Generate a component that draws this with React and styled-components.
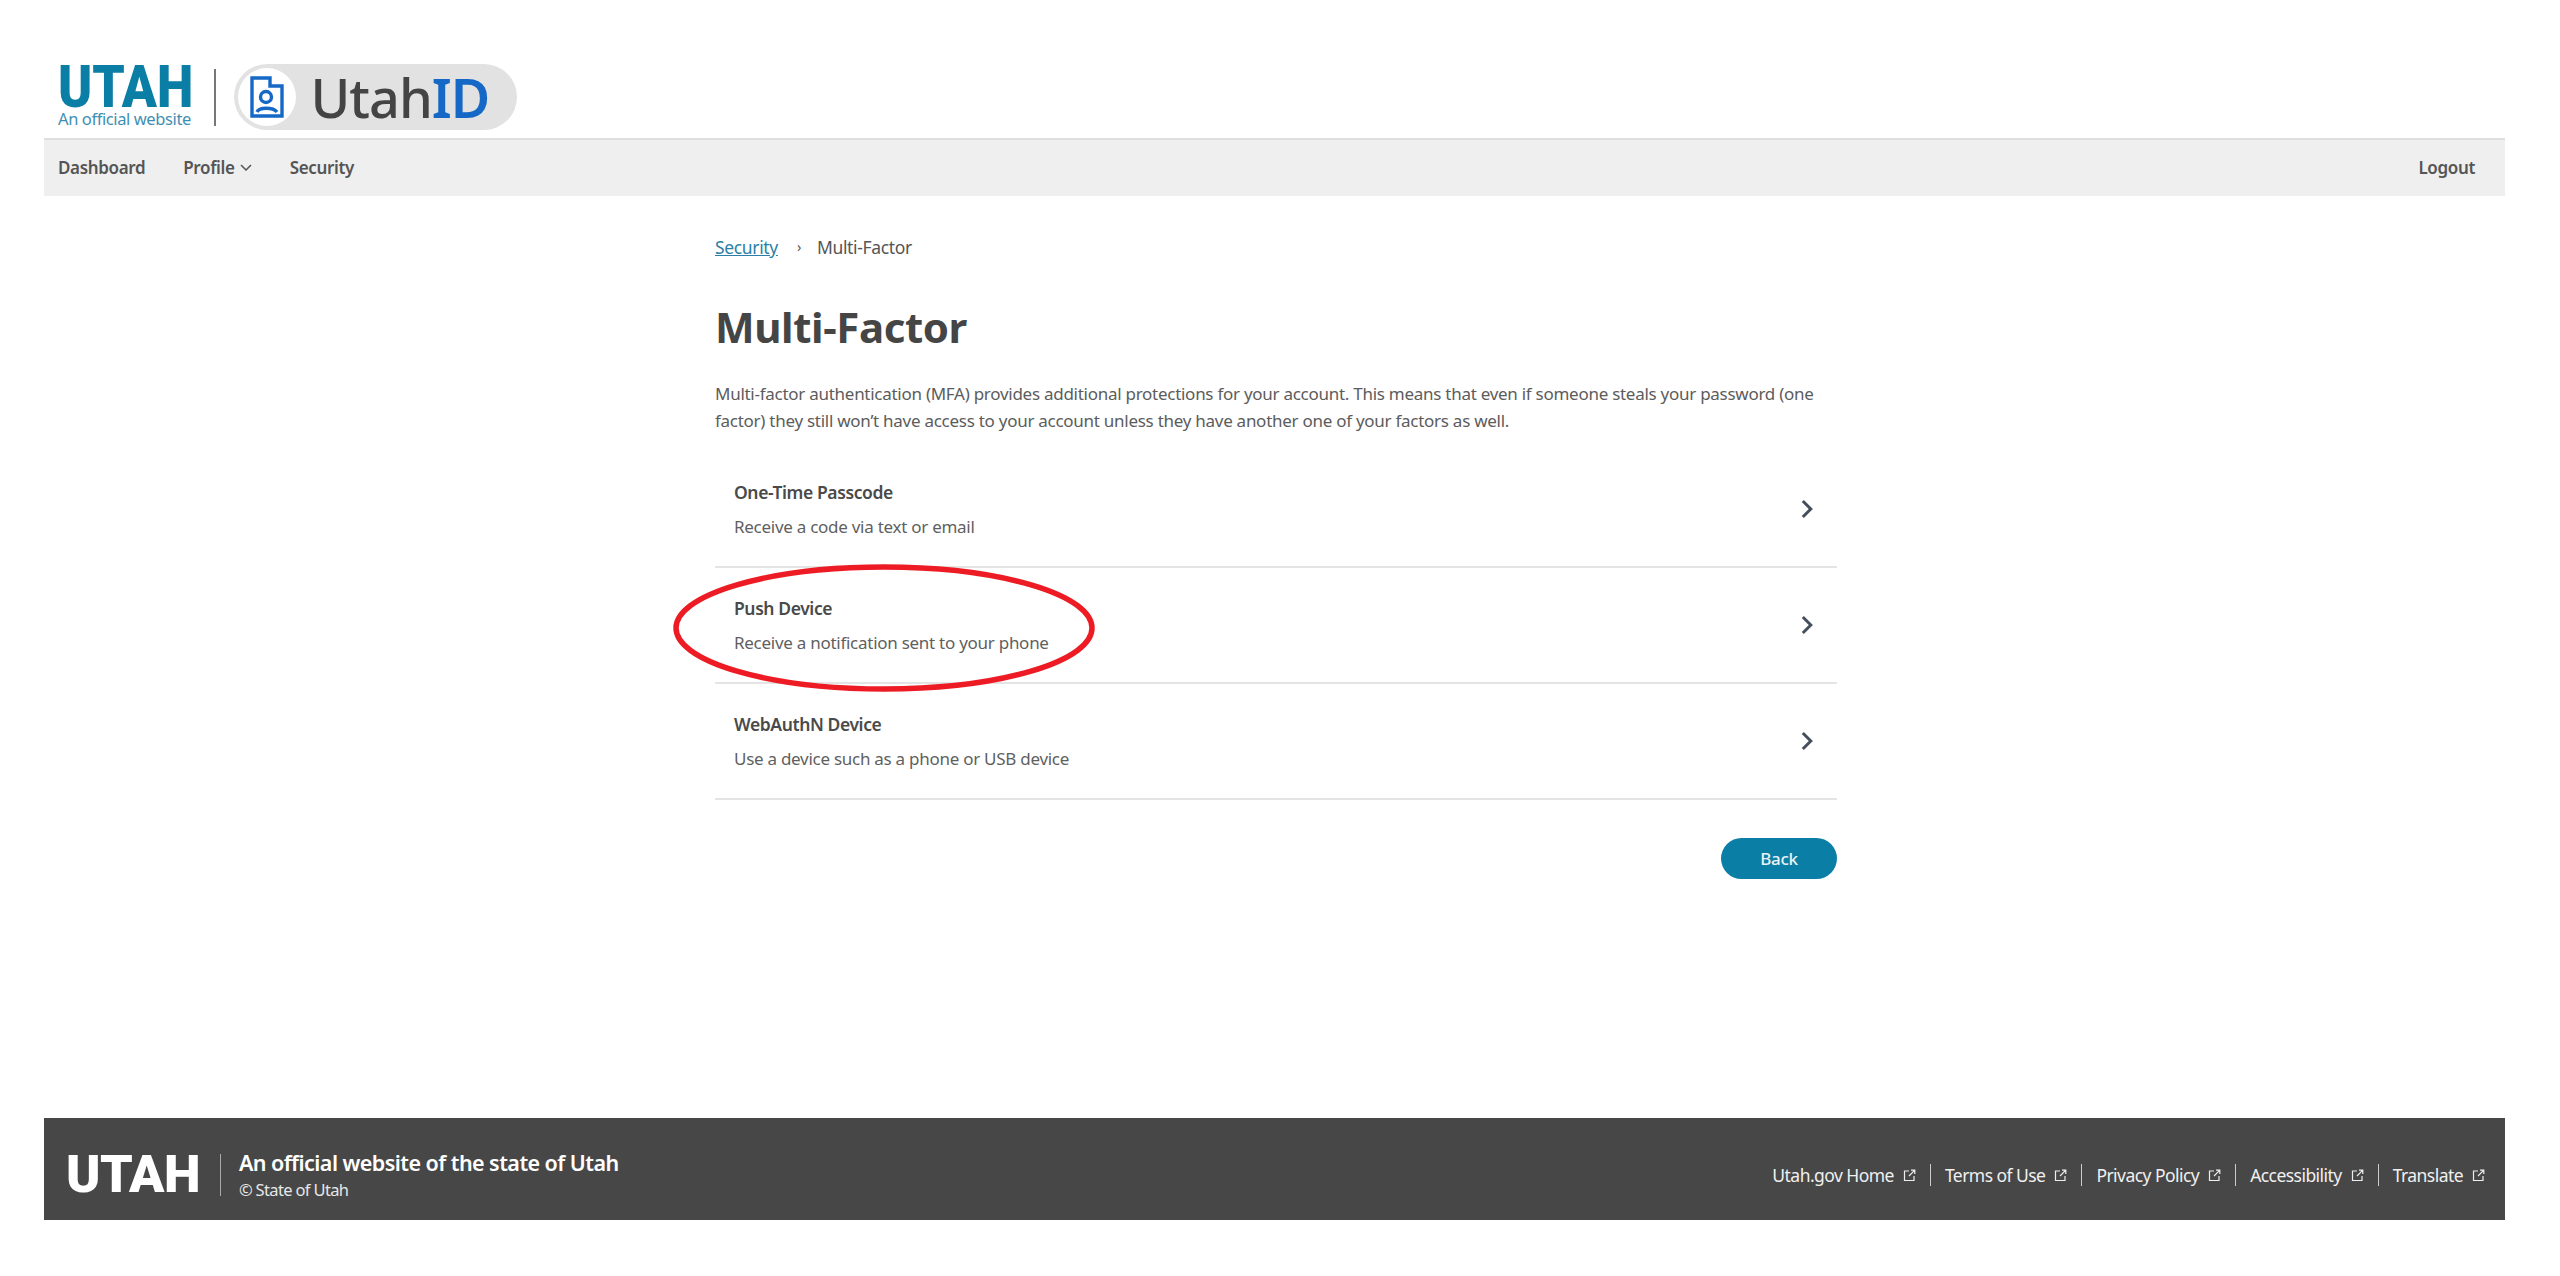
import React from "react";
import styled, { createGlobalStyle } from "styled-components";

const Global = createGlobalStyle`
  html, body { margin: 0; padding: 0; background: #fff; }
  body { font-family: "Noto Sans", "Open Sans", sans-serif; color: #474747; }
`;
const Page = styled.div`
  box-sizing: border-box; min-height: 1276px; padding: 0 55px 56px 44px;
  display: flex; flex-direction: column;
`;
const Header = styled.header`
  height: 138px; box-sizing: border-box; padding: 64px 0 0 14px;
  display: flex; align-items: flex-start;
`;
const StateLogo = styled.div`width: 138px; display: flex; flex-direction: column; align-items: flex-start;`;
const StateMark = styled.span`
  font: 900 60px/46px Roboto, sans-serif; color: #0b7ea6; letter-spacing: 0;
  transform: scaleX(.86); transform-origin: top left; white-space: nowrap;
`;
const StateTag = styled.span`font-size: 16.5px; line-height: 18px; color: #3f8fb3; letter-spacing: -.4px; white-space: nowrap;`;
const LogoDivider = styled.div`width: 1.5px; height: 57px; background: #777; margin: 5px 18px 0 18px;`;
const AppPill = styled.div`
  width: 283px; height: 66px; border-radius: 33px; background: #e2e2e2;
  display: flex; align-items: center; padding-left: 4px; box-sizing: border-box;
`;
const AppBadge = styled.div`
  width: 58px; height: 58px; border-radius: 50%; background: #fff; flex: none;
  display: flex; align-items: center; justify-content: center;
`;
const AppName = styled.span`
  margin-left: 15px; font-size: 54px; line-height: 66px; font-weight: 500; color: #444; letter-spacing: -1px;
`;
const AppNameAccent = styled.span`color: #1568c6; font-weight: 600;`;
const Nav = styled.nav`
  height: 58px; background: #efefef; border-top: 2px solid #dedede; box-sizing: border-box;
  display: flex; align-items: center; padding: 0 30px 2px 14px;
  font-size: 17px; font-weight: 600; color: #555;
`;
const NavItem = styled.a`display: inline-flex; align-items: center; gap: 5px; margin-right: 38px; letter-spacing: -.35px;`;
const NavEnd = styled(NavItem)`margin: 0 0 0 auto;`;
const Main = styled.main`width: 1122px; margin-left: 671px; padding-top: 39px;`;
const Crumbs = styled.div`display: flex; align-items: center; font-size: 17.5px; line-height: 24px; color: #555; letter-spacing: -.35px;`;
const CrumbLink = styled.a`color: #2b7fa6; text-decoration: underline;`;
const CrumbSep = styled.span`margin: 0 16px 0 19px; font-size: 14px;`;
const Title = styled.h1`margin: 38px 0 0; font-size: 42px; line-height: 60px; font-weight: 700; color: #454545; letter-spacing: -.4px;`;
const Intro = styled.p`margin: 23px 0 0; font-size: 17px; line-height: 27px; color: #5c5c5c; letter-spacing: -.27px; width: 1122px;`;
const List = styled.div`margin-top: 18px; position: relative;`;
const Row = styled.a`
  height: 116px; box-sizing: border-box; border-bottom: 2px solid #e4e4e4;
  padding: 0 24px 0 19px; display: flex; align-items: center; justify-content: space-between;
`;
const RowText = styled.div`display: flex; flex-direction: column; gap: 11px;`;
const RowTitle = styled.span`font-size: 17.5px; line-height: 23px; font-weight: 600; color: #4a4a4a; letter-spacing: -.4px;`;
const RowSub = styled.span`font-size: 17px; line-height: 23px; color: #5f5f5f; letter-spacing: -.27px;`;
const Annotation = styled.svg`position: absolute; left: -43px; top: 111px; pointer-events: none;`;
const Actions = styled.div`display: flex; justify-content: flex-end; margin-top: 38px;`;
const BackButton = styled.button`
  width: 116px; height: 41px; border: 0; border-radius: 21px; background: #0b7ea6; color: #e8f3f7;
  font: 500 17px "Noto Sans", sans-serif; letter-spacing: -.3px;
`;
const Footer = styled.footer`
  margin-top: auto; height: 102px; box-sizing: border-box; background: #474747; color: #fff;
  display: flex; align-items: center; padding: 12px 20px 0 22px;
`;
const FooterMark = styled.span`font: 900 52px/1 Roboto, sans-serif; letter-spacing: -.6px; color: #fff;`;
const FooterDivider = styled.div`width: 1px; height: 42px; background: #aaa; margin: 0 18px 0 20px;`;
const FooterText = styled.div`display: flex; flex-direction: column; gap: 4px; margin-top: 0;`;
const FooterTitle = styled.span`font-size: 21.5px; line-height: 26px; font-weight: 600; letter-spacing: -.55px;`;
const FooterSub = styled.span`font-size: 16.5px; line-height: 20px; color: #e6e6e6; letter-spacing: -.65px;`;
const FooterLinks = styled.div`margin-left: auto; display: flex; align-items: center; margin-top: 0;`;
const FooterLink = styled.a`
  display: inline-flex; align-items: center; gap: 9px; font-size: 17.5px; line-height: 22px; color: #f0f0f0; letter-spacing: -.55px;
  & + & { border-left: 1.5px solid #ccc; margin-left: 14px; padding-left: 14px; }
`;

const Chevron = () => (
  <svg width="12" height="20" viewBox="0 0 12 20" fill="none" stroke="#454f5c" strokeWidth="3"><path d="M1.8 2 9.8 10 1.8 18" /></svg>
);
const Caret = () => (
  <svg width="12" height="7" viewBox="0 0 12 7" fill="none" stroke="#555" strokeWidth="1.5"><path d="M1 1l5 5 5-5" /></svg>
);
const External = () => (
  <svg width="13" height="13" viewBox="0 0 13 13" fill="none" stroke="#eee" strokeWidth="1.2">
    <path d="M6 2H1.5v9.5H11V7" /><path d="M8 1.2h3.8V5M11.6 1.4 6 7" />
  </svg>
);
const IdIcon = () => (
  <svg width="34" height="42" viewBox="0 0 34 42" fill="none" stroke="#1568c6" strokeWidth="3.4">
    <path d="M2 2h18v8h12v30H2z" />
    <circle cx="16" cy="21" r="5.5" />
    <path d="M7 36c2-5 16-5 20 0" />
  </svg>
);

const rows = [
  ["One-Time Passcode", "Receive a code via text or email"],
  ["Push Device", "Receive a notification sent to your phone"],
  ["WebAuthN Device", "Use a device such as a phone or USB device"],
];
const links = ["Utah.gov Home", "Terms of Use", "Privacy Policy", "Accessibility", "Translate"];

export default function App() {
  return (
    <>
      <Global />
      <Page>
        <Header>
          <StateLogo>
            <StateMark>UTAH</StateMark>
            <StateTag>An official website</StateTag>
          </StateLogo>
          <LogoDivider />
          <AppPill>
            <AppBadge><IdIcon /></AppBadge>
            <AppName>Utah<AppNameAccent>ID</AppNameAccent></AppName>
          </AppPill>
        </Header>
        <Nav>
          <NavItem>Dashboard</NavItem>
          <NavItem>Profile <Caret /></NavItem>
          <NavItem>Security</NavItem>
          <NavEnd>Logout</NavEnd>
        </Nav>
        <Main>
          <Crumbs>
            <CrumbLink>Security</CrumbLink>
            <CrumbSep>›</CrumbSep>
            <span>Multi-Factor</span>
          </Crumbs>
          <Title>Multi-Factor</Title>
          <Intro>
            Multi-factor authentication (MFA) provides additional protections for your account. This means that even if someone steals your password (one factor) they still won’t have access to your account unless they have another one of your factors as well.
          </Intro>
          <List>
            {rows.map(([t, s]) => (
              <Row key={t}>
                <RowText>
                  <RowTitle>{t}</RowTitle>
                  <RowSub>{s}</RowSub>
                </RowText>
                <Chevron />
              </Row>
            ))}
            <Annotation width="424" height="130" viewBox="0 0 424 130">
              <ellipse cx="212" cy="65" rx="208" ry="61" fill="none" stroke="#ed1c24" strokeWidth="5.5" />
            </Annotation>
          </List>
          <Actions><BackButton>Back</BackButton></Actions>
        </Main>
        <Footer>
          <FooterMark>UTAH</FooterMark>
          <FooterDivider />
          <FooterText>
            <FooterTitle>An official website of the state of Utah</FooterTitle>
            <FooterSub>© State of Utah</FooterSub>
          </FooterText>
          <FooterLinks>
            {links.map((l) => (
              <FooterLink key={l}>{l} <External /></FooterLink>
            ))}
          </FooterLinks>
        </Footer>
      </Page>
    </>
  );
}
